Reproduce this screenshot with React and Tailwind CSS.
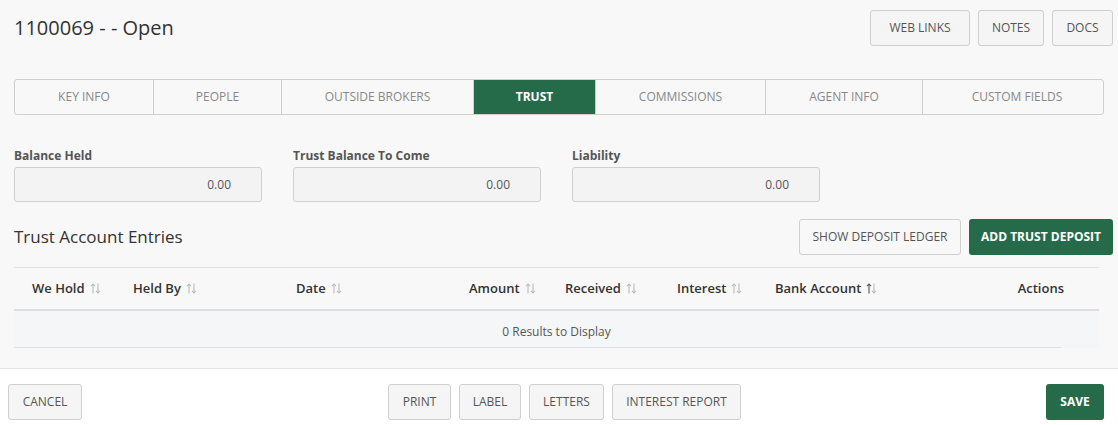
import React from "react";

const font = { fontFamily: '"Open Sans", "Noto Sans", sans-serif' };

const tabs = [
  { name: "KEY INFO", w: "w-[138px]" },
  { name: "PEOPLE", w: "w-[128px]" },
  { name: "OUTSIDE BROKERS", w: "w-[192px]" },
  { name: "TRUST", w: "w-[122px]", active: true },
  { name: "COMMISSIONS", w: "w-[170px]" },
  { name: "AGENT INFO", w: "w-[157px]" },
  { name: "CUSTOM FIELDS", w: "w-[189px]" },
];

const columns = [
  { name: "We Hold", w: "w-[101px]" },
  { name: "Held By", w: "w-[163px]" },
  { name: "Date", w: "w-[173px]" },
  { name: "Amount", w: "w-[96px]" },
  { name: "Received", w: "w-[112px]" },
  { name: "Interest", w: "w-[98px]" },
  { name: "Bank Account", w: "w-[140px]", sorted: true },
];

// up/down sort arrows
const SortIcon = ({ sorted }) => (
  <svg width="11" height="11" viewBox="0 0 11 11" className="inline-block ml-[5px] -mt-[2px]" fill="none" strokeWidth="1.1">
    <g stroke={sorted ? "#555" : "#bbb"}>
      <path d="M3 10.5V1" />
      <path d="M1 3.2L3 1l2 2.2" />
    </g>
    <g stroke="#bbb">
      <path d="M8 0.5V10" />
      <path d="M6 7.8L8 10l2-2.2" />
    </g>
  </svg>
);

const GreyButton = ({ children, className = "" }) => (
  <button
    className={`h-[36px] shrink-0 rounded-[3px] border border-[#cfcfcf] bg-[#f5f5f5] text-[12px] text-[#555] uppercase whitespace-nowrap flex items-center justify-center ${className}`}
  >
    {children}
  </button>
);

const GreenButton = ({ children, className = "" }) => (
  <button
    className={`h-[36px] shrink-0 rounded-[3px] bg-[#256b4a] text-[12px] font-bold text-white uppercase whitespace-nowrap flex items-center justify-center ${className}`}
  >
    {children}
  </button>
);

const Field = ({ label }) => (
  <div className="w-[248px]">
    <div className="text-[12px] font-bold leading-[16px] text-[#555] mb-[3px]">{label}</div>
    <div className="h-[35px] rounded-[3px] border border-[#d0d0d0] bg-[#f3f3f3] flex items-center justify-end pr-[30px] text-[12px] text-[#555]">
      0.00
    </div>
  </div>
);

export default function App() {
  return (
    <div className="w-[1118px] h-[425px] flex flex-col bg-white overflow-hidden" style={font}>
      <div className="bg-[#f8f8f8] h-[369px] px-[14px] border-b border-[#e3e3e3]">
        {/* Header */}
        <div className="flex items-center justify-between pt-[10px] h-[45px]">
          <h1 className="text-[20px] text-[#333]">1100069 - - Open</h1>
          <div className="flex items-center gap-[8px] -mr-[9px]">
            <GreyButton className="w-[100px] h-[32px]">Web Links</GreyButton>
            <GreyButton className="w-[66px] h-[35px]">Notes</GreyButton>
            <GreyButton className="w-[61px] h-[35px]">Docs</GreyButton>
          </div>
        </div>

        {/* Tabs */}
        <div className="mt-[34px] flex h-[36px] rounded-[3px] border border-[#cfcfcf] overflow-hidden">
          {tabs.map((t, i) => (
            <div
              key={t.name}
              className={`${t.w} shrink-0 flex items-center justify-center text-[12px] ${
                i > 0 ? "border-l border-[#cfcfcf]" : ""
              } ${t.active ? "bg-[#256b4a] text-white font-bold" : "text-[#888]"}`}
            >
              {t.name}
            </div>
          ))}
        </div>

        {/* Fields */}
        <div className="mt-[33px] flex gap-[31px]">
          <Field label="Balance Held" />
          <Field label="Trust Balance To Come" />
          <Field label="Liability" />
        </div>

        {/* Entries header */}
        <div className="mt-[17px] flex items-center justify-between">
          <h2 className="text-[17px] text-[#333]">Trust Account Entries</h2>
          <div className="flex gap-[8px] -mr-[9px]">
            <GreyButton className="w-[162px] bg-[#f8f8f8]">Show Deposit Ledger</GreyButton>
            <GreenButton className="w-[144px]">Add Trust Deposit</GreenButton>
          </div>
        </div>

        {/* Table */}
        <div className="mt-[12px] w-[1085px]">
          <div className="flex h-[44px] items-center border-t border-[#e2e2e2] border-b-2 border-b-[#dcdde0] text-[13px] font-semibold text-[#333]">
            {columns.map((c) => (
              <div key={c.name} className={`${c.w} pl-[18px] whitespace-nowrap`}>
                {c.name}
                <SortIcon sorted={c.sorted} />
              </div>
            ))}
            <div className="flex-1 text-right pr-[35px]">Actions</div>
          </div>
          <div className="bg-[#f5f6f8] h-[37px] flex flex-col">
            <div className="flex-1 flex items-center justify-center pt-[5px] text-[12px] text-[#555]">
              0 Results to Display
            </div>
            <div className="w-[1048px] border-b border-[#e2e2e2]" />
          </div>
        </div>
      </div>

      {/* Footer */}
      <div className="flex items-center pt-[15px] px-[8px]">
        <GreyButton className="w-[74px]">Cancel</GreyButton>
        <div className="ml-[306px] flex gap-[8px]">
          <GreyButton className="w-[63px]">Print</GreyButton>
          <GreyButton className="w-[62px]">Label</GreyButton>
          <GreyButton className="w-[75px]">Letters</GreyButton>
          <GreyButton className="w-[129px]">Interest Report</GreyButton>
        </div>
        <GreenButton className="ml-auto mr-[6px] w-[58px]">Save</GreenButton>
      </div>
    </div>
  );
}
